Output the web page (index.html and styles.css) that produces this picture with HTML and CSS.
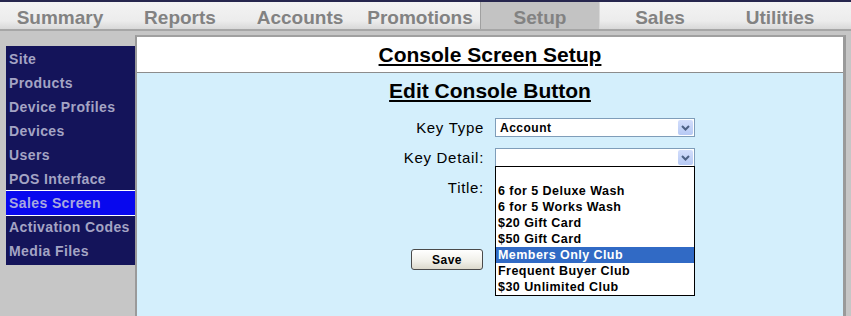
FILE: index.html
```html
<!DOCTYPE html>
<html>
<head>
    <title>Console Screen Setup</title>
    <link rel="stylesheet" href="styles.css">
</head>
<body>
    <div class="topline"></div>
    <nav class="tabs">
        <a class="tab">Summary</a>
        <a class="tab">Reports</a>
        <a class="tab">Accounts</a>
        <a class="tab">Promotions</a>
        <a class="tab active">Setup</a>
        <a class="tab">Sales</a>
        <a class="tab">Utilities</a>
    </nav>
    <div class="layout">
        <ul class="sidebar">
            <li>Site</li>
            <li>Products</li>
            <li>Device Profiles</li>
            <li>Devices</li>
            <li>Users</li>
            <li>POS Interface</li>
            <li class="current">Sales Screen</li>
            <li>Activation Codes</li>
            <li>Media Files</li>
        </ul>
        <div class="main">
            <div class="header">
                <h2>Console Screen Setup</h2>
            </div>
            <div class="content">
                <h3>Edit Console Button</h3>
                <form class="form">
                    <label>Key Type</label>
                    <div class="select">
                        <span>Account</span>
                        <span class="arrow">
                            <svg width="9" height="6" viewBox="0 0 9 6"><path d="M1 1 L4.5 4.5 L8 1" fill="none" stroke="#4d6185" stroke-width="2"/></svg>
                        </span>
                    </div>
                    <label>Key Detail:</label>
                    <div class="select open">
                        <span></span>
                        <span class="arrow">
                            <svg width="9" height="6" viewBox="0 0 9 6"><path d="M1 1 L4.5 4.5 L8 1" fill="none" stroke="#4d6185" stroke-width="2"/></svg>
                        </span>
                        <ul class="list">
                            <li>&nbsp;</li>
                            <li>6 for 5 Deluxe Wash</li>
                            <li>6 for 5 Works Wash</li>
                            <li>$20 Gift Card</li>
                            <li>$50 Gift Card</li>
                            <li class="selected">Members Only Club</li>
                            <li>Frequent Buyer Club</li>
                            <li>$30 Unlimited Club</li>
                        </ul>
                    </div>
                    <label>Title:</label>
                    <input type="text" class="text">
                    <button type="button" class="save">Save</button>
                </form>
            </div>
        </div>
    </div>
</body>
</html>
```

FILE: styles.css
```css
body {
    margin: 0;
    background-color: #c6c6c6;
    font-family: 'Liberation Sans', Arial, sans-serif;
    height: 316px;
    overflow: hidden;
}

.topline {
    height: 2px;
    background-color: #26264e;
}

.tabs {
    display: flex;
    height: 27px;
    background: linear-gradient(#f3f3f3 0, #ececec 70%, #d8d8d8 100%);
    border-bottom: 2px solid #a6a6a6;
}

.tab {
    width: 120px;
    text-align: center;
    font-size: 19px;
    font-weight: bold;
    line-height: 27px;
    padding-top: 2px;
    box-sizing: border-box;
    color: #828282;
}

.tab.active {
    background-color: #c3c3c3;
    box-shadow: inset 1px 0 0 #a0a0a0, inset -1px 0 0 #d8d8d8;
}

.layout {
    display: flex;
    align-items: flex-start;
}

.sidebar {
    list-style: none;
    margin: 15px 0 0 6px;
    padding: 1px 0 2px;
    width: 129px;
    background-color: #14145a;
}

.sidebar li {
    height: 24px;
    line-height: 24px;
    padding-left: 3px;
    font-size: 14px;
    font-weight: bold;
    letter-spacing: 0.4px;
    color: #a4a4c4;
    box-sizing: border-box;
}

.sidebar li.current {
    background-color: #0808ee;
    color: #a8a8e0;
    box-shadow: 0 -1px 0 #ffffff, 0 1px 0 #ffffff;
}

.main {
    flex: 1;
    margin: 4px 5px 0 0;
    height: 281px;
    box-sizing: border-box;
    border-top: 2px solid #a0a0a0;
    border-left: 2px solid #9a9a9a;
    border-right: 3px solid #9a9a9a;
    background-color: #d4effc;
}

.header {
    height: 35px;
    background-color: white;
    border-bottom: 1px solid #8c8c8c;
    display: flex;
    justify-content: center;
    align-items: center;
}

h2, h3 {
    margin: 0;
    font-size: 21px;
    font-weight: bold;
    text-decoration: underline;
    text-underline-offset: 2px;
    color: #000;
}

.content h3 {
    text-align: center;
    line-height: 24px;
    margin-top: 6px;
}

.form {
    display: grid;
    grid-template-columns: 347px 200px;
    grid-auto-rows: 19px;
    column-gap: 11px;
    row-gap: 11px;
    margin-top: 15px;
}

.form label {
    text-align: right;
    font-size: 15px;
    letter-spacing: 0.7px;
    line-height: 19px;
    color: #000;
}

.select {
    position: relative;
    display: flex;
    align-items: center;
    justify-content: space-between;
    height: 19px;
    box-sizing: border-box;
    border: 1px solid #7f9db9;
    background-color: white;
    padding-left: 4px;
    font-size: 12px;
    font-weight: bold;
    letter-spacing: 0.5px;
}

.arrow {
    width: 15px;
    height: 15px;
    margin-right: 1px;
    border-radius: 2px;
    background: linear-gradient(#d3defc, #b6c9f4);
    display: flex;
    align-items: center;
    justify-content: center;
}

.list {
    position: absolute;
    z-index: 2;
    top: 17px;
    left: -1px;
    width: 200px;
    margin: 0;
    padding: 0;
    list-style: none;
    background-color: white;
    border: 1px solid #000;
    box-sizing: border-box;
}

.list li {
    height: 16px;
    line-height: 16px;
    padding-left: 2px;
    font-size: 12.5px;
    font-weight: bold;
    letter-spacing: 0.45px;
    color: #000;
}

.list li.selected {
    background-color: #316ac5;
    color: white;
}

.text {
    height: 19px;
    box-sizing: border-box;
    border: 1px solid #7f9db9;
}

.save {
    grid-column: 1;
    justify-self: end;
    margin-top: 41px;
    margin-right: 1px;
    width: 72px;
    height: 21px;
    border: 1px solid #4a4a4a;
    border-radius: 3px;
    background: linear-gradient(#ffffff, #f0efe8 60%, #dcd9cc);
    font-family: 'Liberation Sans', Arial, sans-serif;
    font-size: 12px;
    font-weight: bold;
    letter-spacing: 0.5px;
    color: #000;
    padding: 0;
}
```
